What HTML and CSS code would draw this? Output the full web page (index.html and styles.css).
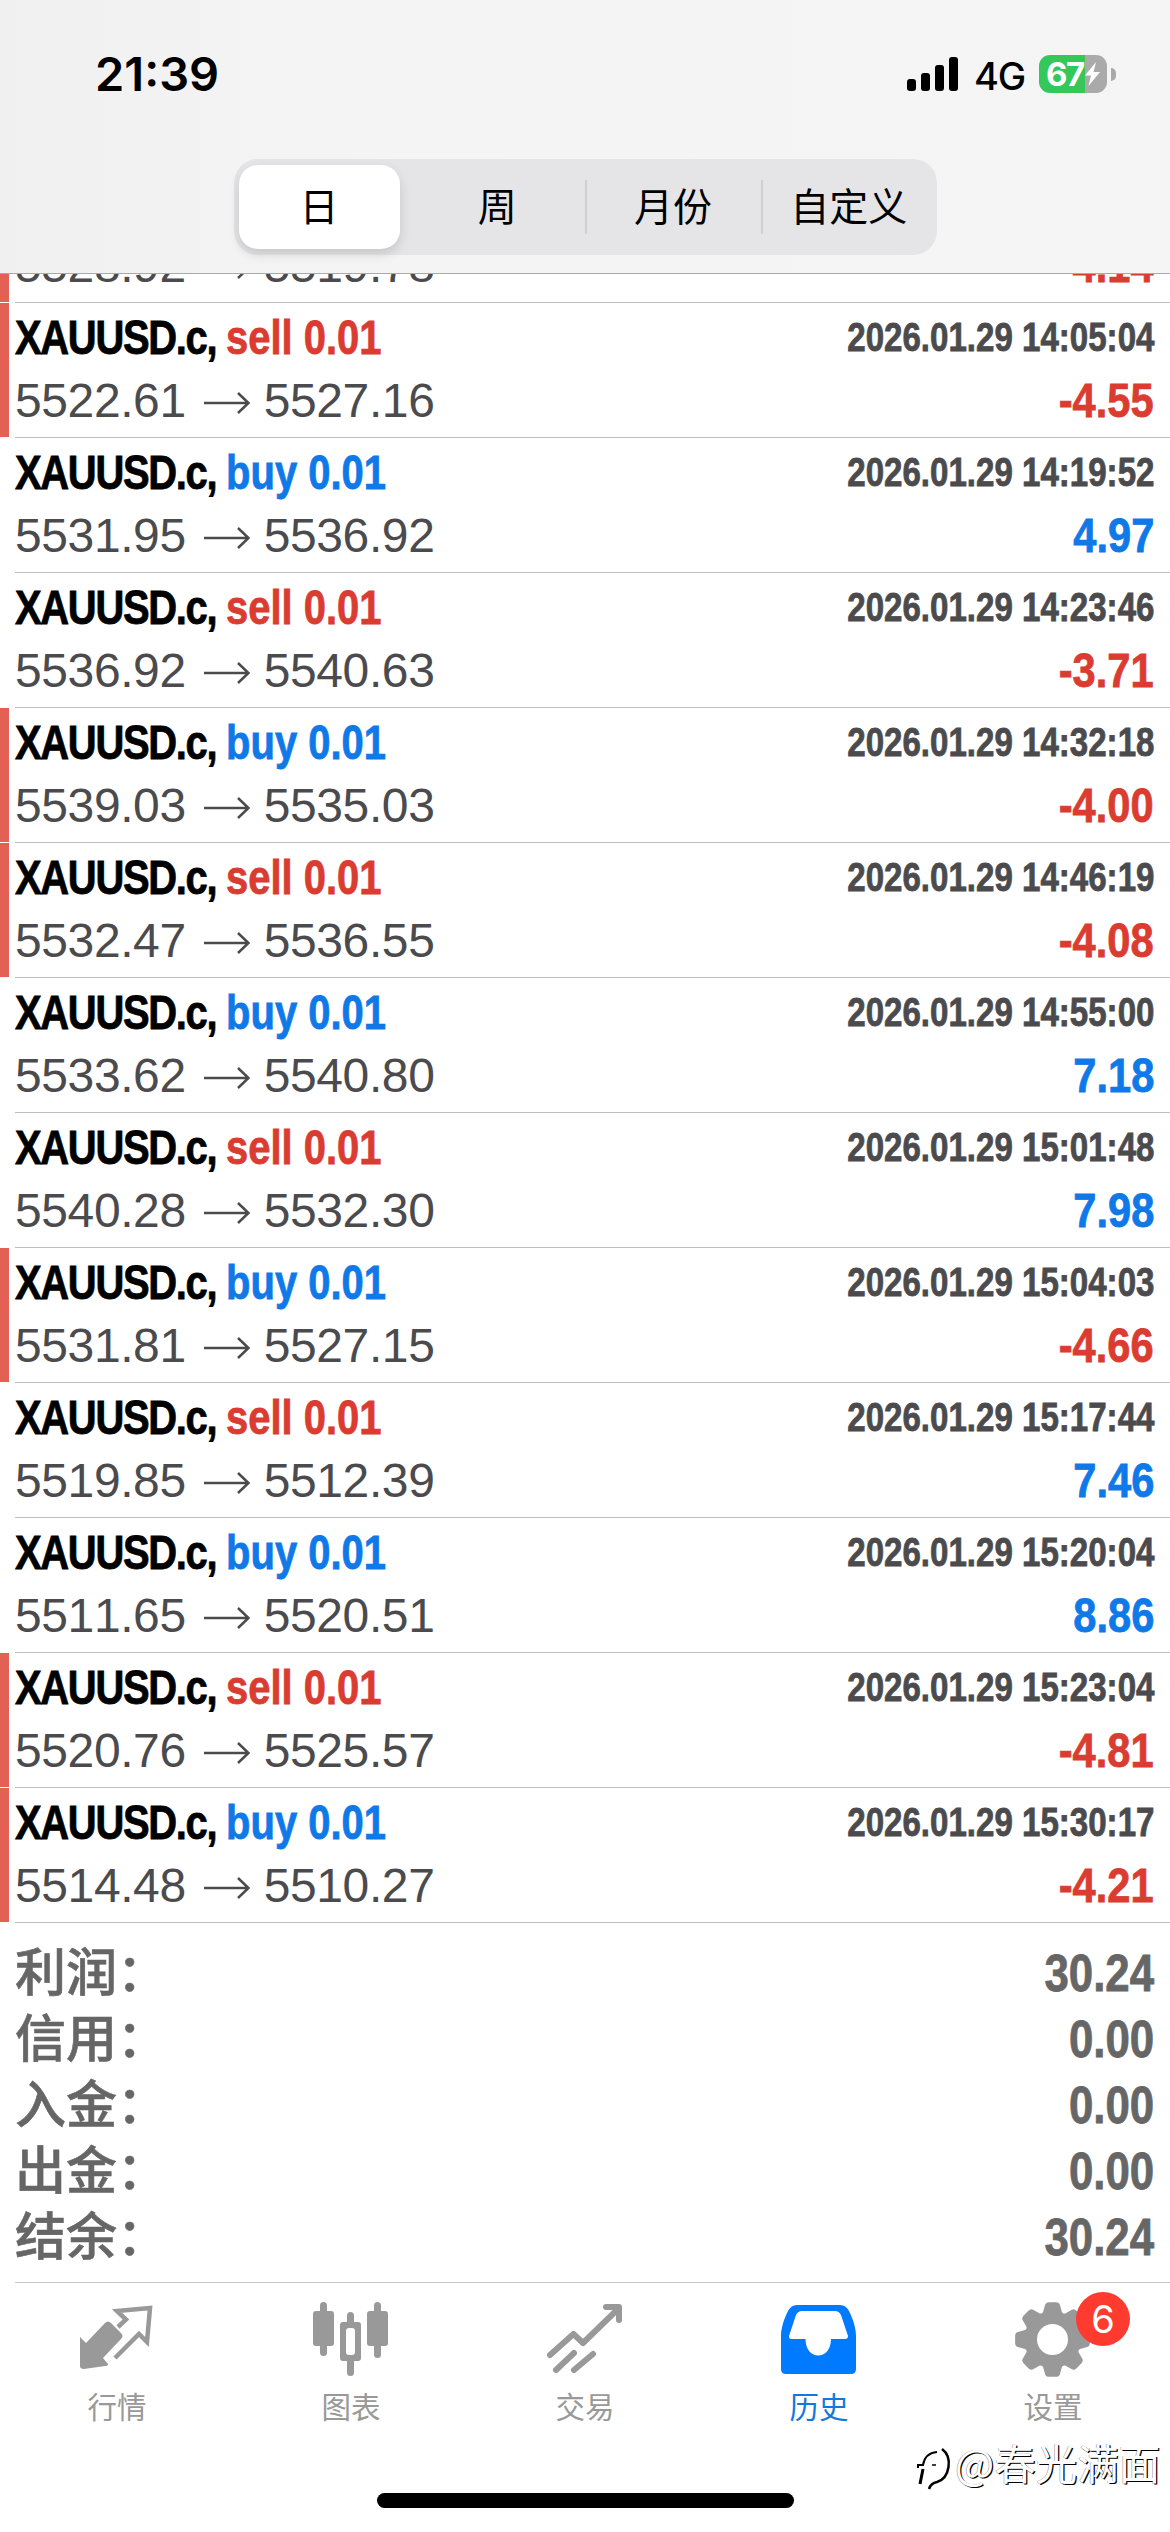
FILE: index.html
```html
<!DOCTYPE html>
<html lang="zh-CN">
<head>
<meta charset="utf-8">
<title>历史</title>
<link rel="stylesheet" href="styles.css">
</head>
<body>
<div class="screen">
  <header class="header">
    <div class="status">
      <span class="clock">21:39</span>
      <div class="indicators">
        <svg class="signal" width="52" height="34" viewBox="0 0 52 34"><rect x="0" y="22" width="9" height="12" rx="3"/><rect x="14" y="16" width="9" height="18" rx="3"/><rect x="28" y="8" width="9" height="26" rx="3"/><rect x="42" y="0" width="9" height="34" rx="3"/></svg>
        <span class="network">4G</span>
        <div class="battery">
          <div class="cell"><span class="level">67</span><svg class="bolt" width="17" height="26" viewBox="0 0 17 26"><path d="M12 1 1 14.500h6L4.500 25 16 11H9.500z"/></svg></div>
          <span class="nub"></span>
        </div>
      </div>
    </div>
    <nav class="segments">
      <span class="segment selected">日</span><span class="segment">周</span><span class="segment divided">月份</span><span class="segment divided">自定义</span>
    </nav>
  </header>
  <main class="history" id="history"></main>
  <section class="totals">
    <div class="total"><span>利润：</span><b>30.24</b></div>
    <div class="total"><span>信用：</span><b>0.00</b></div>
    <div class="total"><span>入金：</span><b>0.00</b></div>
    <div class="total"><span>出金：</span><b>0.00</b></div>
    <div class="total"><span>结余：</span><b>30.24</b></div>
  </section>
  <footer class="tabs">
    <a class="tab"><svg width="76" height="80" viewBox="0 0 76 80"><path d="M1 32 7 38 26 18Q29 15 32 18L42 28Q45 31 42 34L24 53 29 59Q29 61 26 61L5 64Q1 64 1 61Z" fill="currentColor"/><path d="M39 22 47 14.500 38 6 71 3 68 37 60 29 36 53" fill="none" stroke="currentColor" stroke-width="4.500"/></svg><span>行情</span></a>
    <a class="tab"><svg width="76" height="80" viewBox="0 0 76 80" fill="currentColor"><rect x="0" y="6" width="21" height="35" rx="3"/><rect x="7" y="-3" width="7" height="54" rx="3.500"/><rect x="54" y="6" width="21" height="35" rx="3"/><rect x="61" y="-3" width="7" height="56" rx="3.500"/><path fill-rule="evenodd" d="M34 17V10.500a3.500 3.500 0 0 1 7 0V17H45a3 3 0 0 1 3 3V53a3 3 0 0 1-3 3H41V67.500a3.500 3.500 0 0 1-7 0V56H30a3 3 0 0 1-3-3V20a3 3 0 0 1 3-3ZM36 23a3 3 0 0 0-3 3V47a3 3 0 0 0 3 3H39a3 3 0 0 0 3-3V26a3 3 0 0 0-3-3Z"/></svg><span>图表</span></a>
    <a class="tab"><svg width="76" height="80" viewBox="0 0 76 80" fill="none" stroke="currentColor" stroke-width="6" stroke-linejoin="round" stroke-linecap="round"><path d="M3 50 26.500 29 36 38 71 4M59 2H72V15M9 65 27 48M27 65 46 49"/></svg><span>交易</span></a>
    <a class="tab active"><svg width="76" height="80" viewBox="0 0 76 80"><path fill="currentColor" fill-rule="evenodd" d="M16 0H59Q65 0 68 6C72 14 75 23 75 31V64Q75 69 70 69H5Q0 69 0 64V31C0 23 3 14 7 6Q10 0 16 0ZM21 6Q17 6 15 10L8 31Q8 34 10 34H24.500C24.500 56 50 56 50 34H64Q67 34 67 31L60 10Q58 6 54 6Z"/></svg><span>历史</span></a>
    <a class="tab"><svg width="76" height="80" viewBox="0 0 76 80"><path id="gear" fill="currentColor" fill-rule="evenodd"/></svg><span>设置</span><i class="badge">6</i></a>
  </footer>
  <div class="homebar"></div>
  <div class="watermark"><svg width="36" height="46" viewBox="0 0 36 46" fill="none" stroke="#000"><path d="M4 39 7 24" stroke-width="3"/><path d="M2 23V20H7Q9 8 21 7" stroke-width="2"/><path d="M16 20H20" stroke-width="1.500"/><path d="M26 4C37 12 34 33 21 37Q15 38 13 44" stroke-width="2.500"/></svg><span>@春光满面</span></div>
</div>
<script src="app.js"></script>
</body>
</html>
```
FILE: styles.css
```css
* { box-sizing: border-box; }
body { margin: 0; background: #fff; }
.screen { position: relative; width: 1170px; height: 2532px; overflow: hidden; display: flex; flex-direction: column; font-family: "Liberation Sans", "Noto Sans CJK SC", sans-serif; font-kerning: none; background: #fff; }
.header { flex: none; height: 274px; background: linear-gradient(90deg, #f1f0f0, #f5f4f5 25%, #f5f5f5); border-bottom: 1px solid #aaa; display: flex; flex-direction: column; align-items: center; }
.status { width: 100%; height: 159px; padding: 44px 54px 0 95px; display: flex; justify-content: space-between; align-items: flex-start; font-family: Inter, sans-serif; }
.clock { font-size: 47px; line-height: 60px; font-weight: 600; }
.indicators { display: flex; align-items: center; height: 60px; }
.network { font-size: 38px; font-weight: 500; margin: 4px 14px 0 15px; letter-spacing: -1.2px; }
.battery { display: flex; align-items: center; gap: 4px; }
.cell { width: 68px; height: 38px; border-radius: 11px; background: linear-gradient(90deg, #34c759 46px, #aaa 46px); display: flex; align-items: center; padding-left: 7px; color: #fff; }
.level { font-size: 33px; line-height: 38px; font-weight: 700; letter-spacing: -1.5px; }
.bolt { fill: #fff; }
.nub { width: 5px; height: 13px; background: #aaa; border-radius: 0 6px 6px 0; }
.segments { width: 703px; height: 96px; border-radius: 24px; background: #e5e5e7; padding: 6px 0 6px 5px; display: flex; font: 39px/78px "Noto Sans CJK SC", sans-serif; }
.segment { position: relative; flex: 1; height: 84px; text-align: center; }
.segment.selected { flex: 0 0 161px; margin-right: 10px; border-radius: 19px; background: #fff; box-shadow: 0 5px 12px #0002; }
.segment.divided::before { content: ""; position: absolute; left: 0; top: 15px; height: 54px; width: 2px; background: #cfcfd2; }
.history { flex: none; height: 1649px; display: flex; flex-direction: column; justify-content: flex-end; overflow: hidden; }
.deal { flex: none; height: 135px; display: grid; grid-template-columns: 9px 1fr; grid-template-rows: 100%; column-gap: 6px; }
.deal.partial { height: 29px; overflow: hidden; }
.deal.partial .info { padding: 0 16px 0 0; display: flex; flex-direction: column; justify-content: flex-end; }
.deal.partial .line { flex: none; margin-bottom: 5px; }
.deal::before { content: ""; margin-bottom: 1px; }
.deal.stopped::before { background: #e45f54; }
.info { min-width: 0; border-bottom: 1px solid #bebec1; padding: 3px 16px 0 0; }
.line { display: flex; justify-content: space-between; height: 63px; line-height: 63px; white-space: pre; }
.symbol, .when, .profit, .total b { font-weight: 700; -webkit-text-stroke: 0.8px currentColor; }
.symbol { font-size: 49px; transform: scaleX(0.815); transform-origin: left; }
.name { color: #000; letter-spacing: -1.6px; }
.when { font-size: 40px; color: #4b4b4e; transform: scaleX(0.827); transform-origin: right; }
.prices { font-size: 48px; letter-spacing: -0.4px; color: #4b4b4e; display: flex; align-items: center; }
.arrow { margin: 4px 14px 0 18px; }
.profit { font-size: 49px; transform: scaleX(0.85); transform-origin: right; }
.sell, .loss { color: #da3c31; }
.buy, .gain { color: #0f79e8; }
.totals { flex: none; height: 359px; padding: 17px 16px 0 15px; color: #666; }
.total { display: flex; justify-content: space-between; height: 66px; line-height: 66px; font-size: 51px; font-weight: 500; }
.total span { font-family: "Noto Sans CJK SC", sans-serif; height: 66px; line-height: 58px; -webkit-text-stroke: 0.6px currentColor; }
.total b { font-size: 52px; transform: scaleX(0.843); transform-origin: right; }
.tabs { flex: none; height: 150px; border-top: 1px solid #c8c8ca; margin-left: 15px; display: grid; grid-template-columns: 219px repeat(4, 234px); color: #999; }
.tab { position: relative; display: flex; flex-direction: column; align-items: center; padding-top: 22px; font: 29.5px/40px "Noto Sans CJK SC", sans-serif; }
.tab:first-child { padding-right: 15px; }
.tab svg { overflow: visible; }
.tab.active { color: #007aff; }
.tab.active span { color: #1377dc; }
.badge { position: absolute; left: 140px; top: 9px; width: 54px; height: 54px; border-radius: 50%; background: #ff3b30; color: #fff; font: 38px/54px Inter, sans-serif; text-align: center; }
.homebar { flex: none; width: 417px; height: 15px; border-radius: 8px; background: #000; margin: 61px 0 0 377px; }
.watermark { position: absolute; left: 916px; top: 2438px; display: flex; gap: 3px; align-items: flex-start; font: 41.5px/48px "Noto Sans CJK SC", sans-serif; color: #fff; text-shadow: 1.3px 1.3px 0.5px #000, -0.5px -0.5px 0.5px #888; }
.watermark svg { margin-top: 7px; }
```
FILE: app.js
```js
const deals = [
  ['sell', '5522.61', '5527.16', '2026.01.29 14:05:04', '-4.55', 1],
  ['buy', '5531.95', '5536.92', '2026.01.29 14:19:52', '4.97', 0],
  ['sell', '5536.92', '5540.63', '2026.01.29 14:23:46', '-3.71', 0],
  ['buy', '5539.03', '5535.03', '2026.01.29 14:32:18', '-4.00', 1],
  ['sell', '5532.47', '5536.55', '2026.01.29 14:46:19', '-4.08', 1],
  ['buy', '5533.62', '5540.80', '2026.01.29 14:55:00', '7.18', 0],
  ['sell', '5540.28', '5532.30', '2026.01.29 15:01:48', '7.98', 0],
  ['buy', '5531.81', '5527.15', '2026.01.29 15:04:03', '-4.66', 1],
  ['sell', '5519.85', '5512.39', '2026.01.29 15:17:44', '7.46', 0],
  ['buy', '5511.65', '5520.51', '2026.01.29 15:20:04', '8.86', 0],
  ['sell', '5520.76', '5525.57', '2026.01.29 15:23:04', '-4.81', 1],
  ['buy', '5514.48', '5510.27', '2026.01.29 15:30:17', '-4.21', 1]
];
const arrow = '<svg class="arrow" width="46" height="22" viewBox="0 0 46 22" fill="none" stroke="currentColor" stroke-width="2.5"><path d="M0 11H44M34 1 44.500 11 34 21"/></svg>';
const result = (open, close, profit) => `<div class="line"><span class="prices">${open}${arrow}${close}</span><span class="profit ${profit[0] === '-' ? 'loss' : 'gain'}">${profit}</span></div>`;

// The list is scrolled: only the lower edge of the first deal shows.
document.getElementById('history').innerHTML =
  `<div class="deal partial stopped"><div class="info">${result('5528.92', '5519.78', '-4.14')}</div></div>` +
  deals.map(([side, open, close, when, profit, stopped]) => `
<div class="deal${stopped ? ' stopped' : ''}"><div class="info">
<div class="line"><span class="symbol ${side}"><span class="name">XAUUSD.c, </span>${side} 0.01</span><span class="when">${when}</span></div>
${result(open, close, profit)}
</div></div>`).join('');

// Eight-toothed cog: each tooth is a rounded trapezoid around the hub.
const at = (r, deg) => {
  const a = deg * Math.PI / 180;
  return (37.5 + r * Math.sin(a)).toFixed(2) + ' ' + (34.5 - r * Math.cos(a)).toFixed(2);
};
let d = '';
for (let i = 0; i < 8; i++) {
  const c = i * 45;
  d += (i ? 'L' : 'M') + at(29, c - 19) + 'L' + at(35.5, c - 12) + 'Q' + at(38, c - 10) + ' ' + at(37.5, c - 5)
    + 'L' + at(37.5, c + 5) + 'Q' + at(38, c + 10) + ' ' + at(35.5, c + 12) + 'L' + at(29, c + 19) + 'Q' + at(27.5, c + 22.5) + ' ' + at(29, c + 26);
}
d += 'ZM22 34.500a15.500 15.500 0 1 0 31 0a15.500 15.500 0 1 0-31 0Z';
document.getElementById('gear').setAttribute('d', d);
```
